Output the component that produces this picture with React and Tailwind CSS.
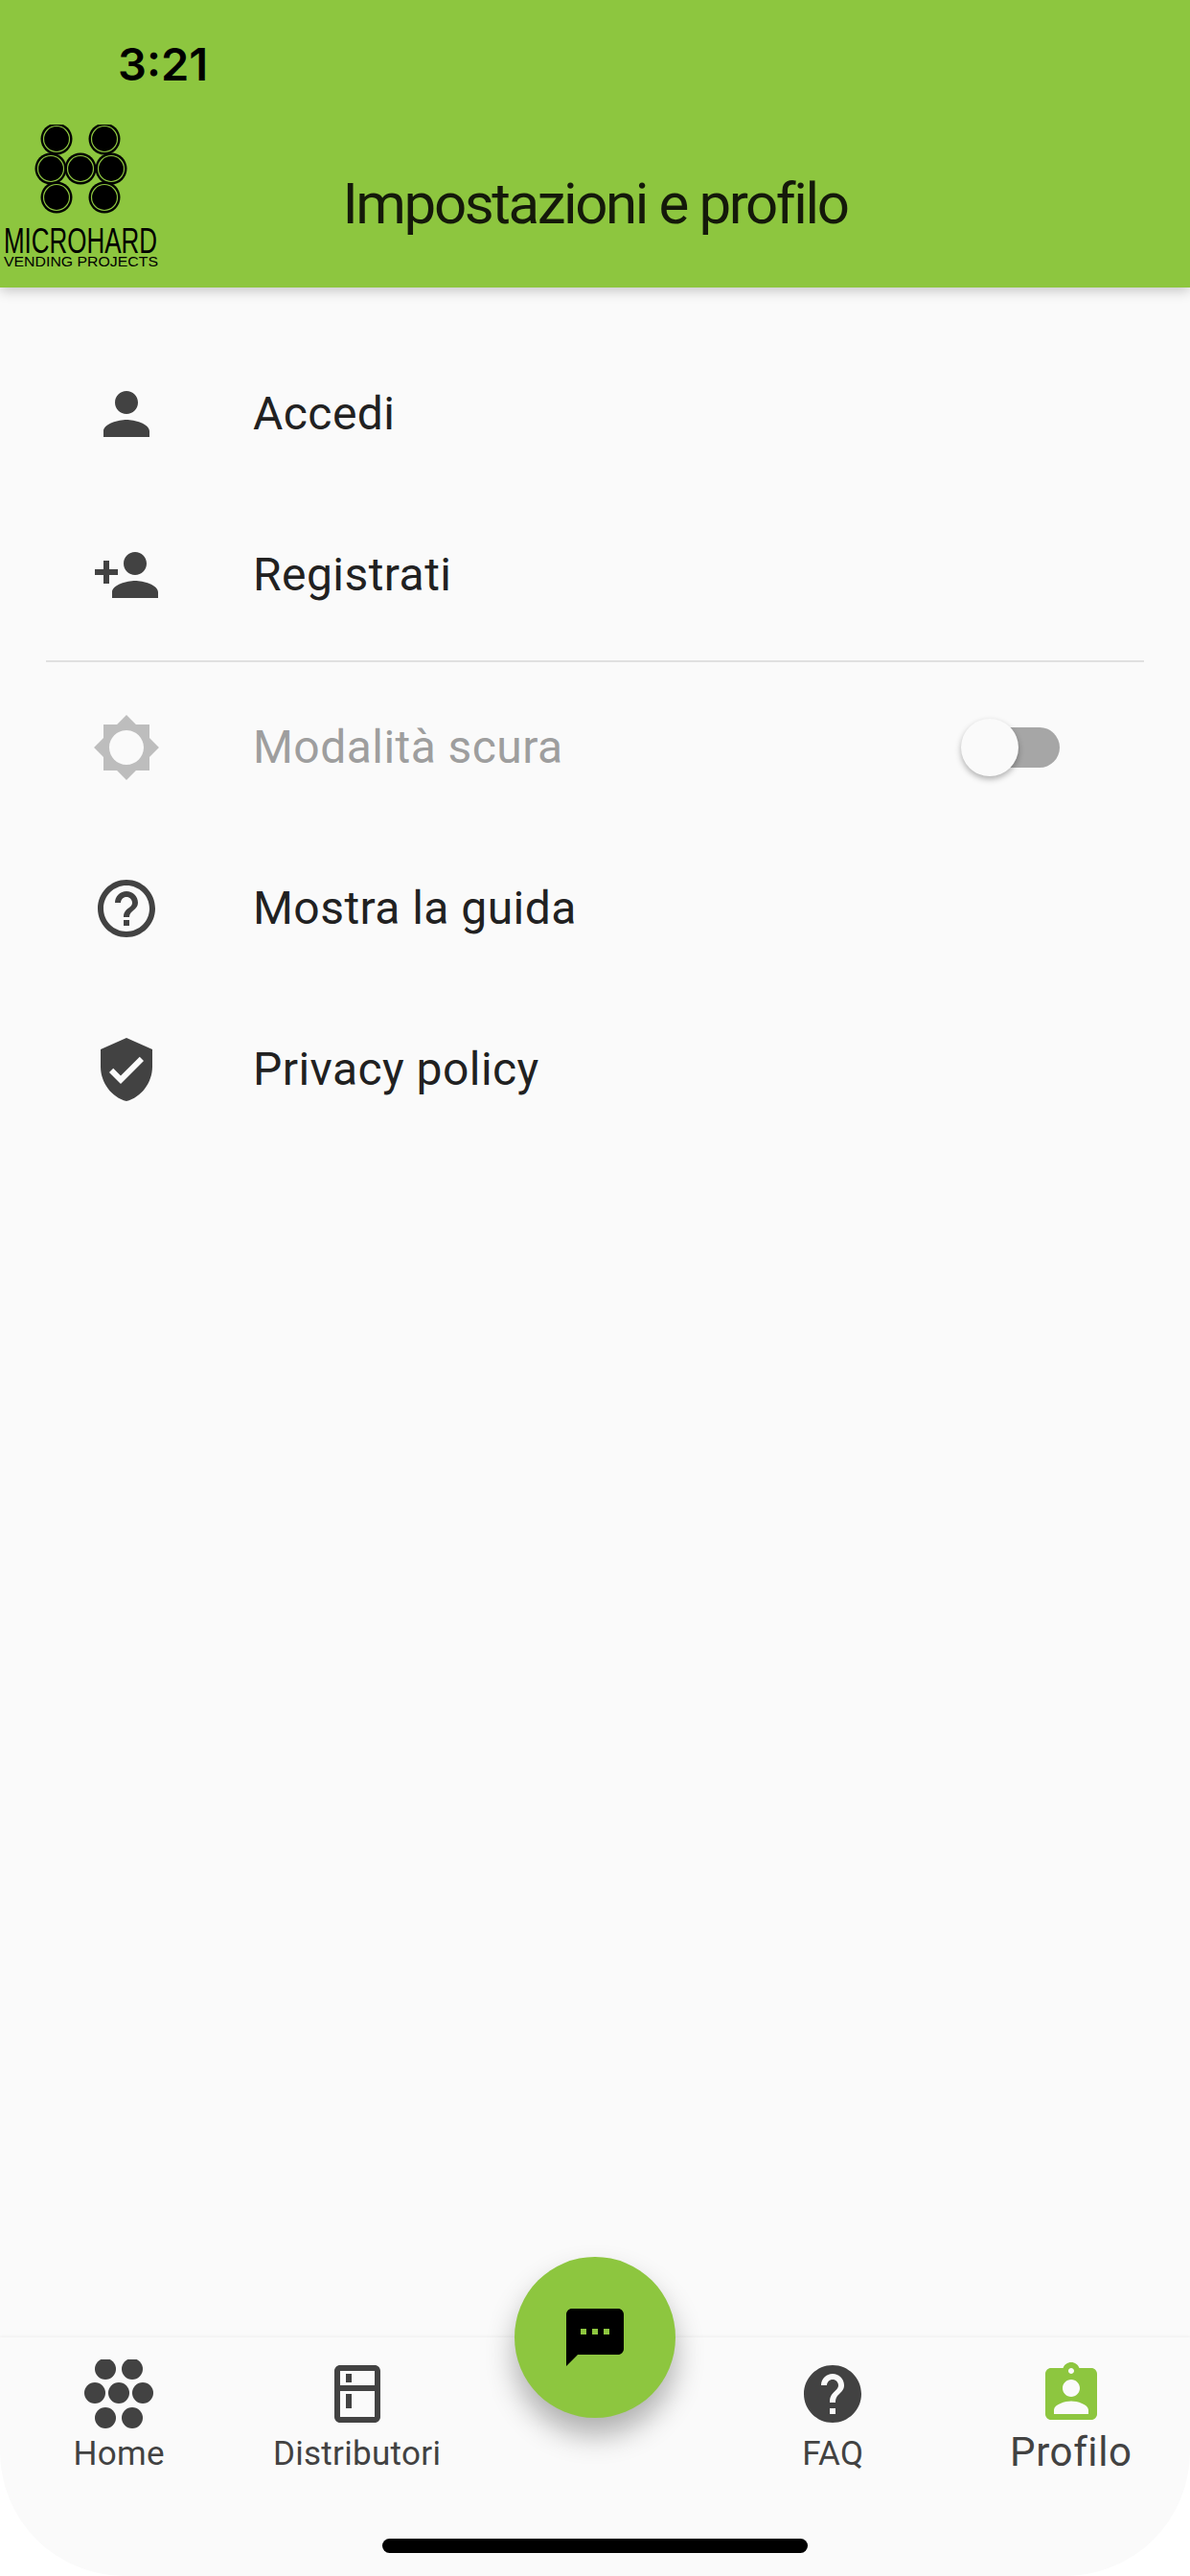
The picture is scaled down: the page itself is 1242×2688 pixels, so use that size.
import React from 'react';

const GREEN = '#8dc63f';

const Icon = ({ d, className = '', fill = '#424242' }) => (
  <svg viewBox="0 0 24 24" width="72" height="72" fill={fill} className={`shrink-0 ${className}`}>
    <path d={d} fillRule="evenodd" />
  </svg>
);

const icons = {
  person: 'M12 12c2.21 0 4-1.79 4-4s-1.79-4-4-4-4 1.79-4 4 1.79 4 4 4zm0 2c-2.67 0-8 1.34-8 4v2h16v-2c0-2.66-5.33-4-8-4z',
  personAdd: 'M15 12c2.21 0 4-1.79 4-4s-1.79-4-4-4-4 1.79-4 4 1.79 4 4 4zm-9-2V7H4v3H1v2h3v3h2v-3h3v-2H6zm9 4c-2.67 0-8 1.34-8 4v2h16v-2c0-2.66-5.33-4-8-4z',
  sun: 'M20 15.31L23.31 12 20 8.69V4h-4.69L12 .69 8.69 4H4v4.69L.69 12 4 15.31V20h4.69L12 23.31 15.31 20H20v-4.69zM12 18c-3.31 0-6-2.69-6-6s2.69-6 6-6 6 2.69 6 6-2.69 6-6 6z',
  helpOutline: 'M11 18h2v-2h-2v2zm1-16C6.48 2 2 6.48 2 12s4.48 10 10 10 10-4.48 10-10S17.52 2 12 2zm0 18c-4.41 0-8-3.59-8-8s3.59-8 8-8 8 3.59 8 8-3.59 8-8 8zm0-14c-2.21 0-4 1.79-4 4h2c0-1.1.9-2 2-2s2 .9 2 2c0 2-3 1.75-3 5h2c0-2.25 3-2.5 3-5 0-2.21-1.79-4-4-4z',
  shield: 'M12 1L3 5v6c0 5.55 3.84 10.74 9 12 5.16-1.26 9-6.45 9-12V5l-9-4zm-2 16l-4-4 1.41-1.41L10 14.17l6.59-6.59L18 9l-8 8z',
  sms: 'M20 2H4c-1.1 0-1.99.9-1.99 2L2 22l4-4h14c1.1 0 2-.9 2-2V4c0-1.1-.9-2-2-2zM9 11H7V9h2v2zm4 0h-2V9h2v2zm4 0h-2V9h2v2z',
  kitchen: 'M18 2.01L6 2c-1.1 0-2 .89-2 2v16c0 1.1.9 2 2 2h12c1.1 0 2-.9 2-2V4c0-1.11-.9-1.99-2-1.99zM18 20H6v-9.02h12V20zm0-11H6V4h12v5zM8 5h2v3H8zm0 7h2v5H8z',
  help: 'M12 2C6.48 2 2 6.48 2 12s4.48 10 10 10 10-4.48 10-10S17.52 2 12 2zm1 17h-2v-2h2v2zm2.07-7.75l-.9.92C13.45 12.9 13 13.5 13 15h-2v-.5c0-1.1.45-2.1 1.17-2.83l1.24-1.26c.37-.36.59-.86.59-1.41 0-1.1-.9-2-2-2s-2 .9-2 2H8c0-2.21 1.79-4 4-4s4 1.79 4 4c0 .88-.36 1.68-.93 2.25z',
  badge: 'M19 3h-4.18C14.4 1.84 13.3 1 12 1c-1.3 0-2.4.84-2.82 2H5c-1.1 0-2 .9-2 2v14c0 1.1.9 2 2 2h14c1.1 0 2-.9 2-2V5c0-1.1-.9-2-2-2zm-7 0c.55 0 1 .45 1 1s-.45 1-1 1-1-.45-1-1 .45-1 1-1zm0 4c1.66 0 3 1.34 3 3s-1.34 3-3 3-3-1.34-3-3 1.34-3 3-3zm6 12H6v-1.4c0-2 4-3.1 6-3.1s6 1.1 6 3.1V19z',
};

const HomeDots = () => (
  <svg viewBox="0 0 72 72" width="72" height="72" fill="#424242" className="shrink-0">
    {[[22, 10], [50, 10], [11, 35], [36, 35], [61, 35], [22, 61], [50, 61]].map(([cx, cy]) => (
      <circle key={`${cx}-${cy}`} cx={cx} cy={cy} r="11" />
    ))}
  </svg>
);

const Logo = () => (
  <svg viewBox="0 0 170 150" width="170" height="150" className="shrink-0">
    {[[59, 160], [109, 160], [53, 191], [84, 191], [116, 191], [59, 221], [109, 221]].map(([x, y]) => (
      <g key={`${x}-${y}`}>
        <circle cx={x} cy={y - 145} r="16.5" fill="#000" />
        <circle cx={x} cy={y - 145} r="13.5" fill="none" stroke={GREEN} strokeWidth="1.2" />
      </g>
    ))}
    <text x="4" y="134" textLength="160" lengthAdjust="spacingAndGlyphs" fontFamily="Liberation Sans, sans-serif" fontSize="36" fill="#000">MICROHARD</text>
    <text x="4" y="148" textLength="161" lengthAdjust="spacingAndGlyphs" fontFamily="Liberation Sans, sans-serif" fontSize="14" fill="#000">VENDING PROJECTS</text>
  </svg>
);

const Row = ({ icon, label, disabled, children }) => (
  <div className="flex h-[168px] items-center pl-[96px]">
    <Icon d={icon} fill={disabled ? '#bdbdbd' : '#424242'} />
    <span className={`ml-[96px] text-[48px] leading-[56px] tracking-[0.45px] ${disabled ? 'text-[#9e9e9e]' : 'text-[#212121]'}`}>
      {label}
    </span>
    {children}
  </div>
);

const NavItem = ({ icon, label, big }) => (
  <div className="flex flex-col items-center pt-[23px]">
    {icon}
    <span className={big ? 'mt-[5px] text-[42px] leading-[40px] tracking-[0.6px] text-[#424242]' : 'mt-[7px] text-[35px] leading-[40px] tracking-[0.3px] text-[#424242]'}>
      {label}
    </span>
  </div>
);

export default function App() {
  return (
    <div className="h-[2688px] w-[1242px] overflow-hidden bg-white font-[Roboto,sans-serif]">
      <div className="flex h-full flex-col rounded-b-[130px] bg-[#fafafa]">
        {/* App bar */}
        <header className="relative z-10 h-[300px] shrink-0 bg-[#8dc63f] shadow-[0_4px_12px_rgba(0,0,0,0.2)]">
          <div className="h-[130px] pl-[123px] pt-[39px] font-[Inter,sans-serif] text-[47px] font-semibold leading-[56px] text-black">3:21</div>
          <div className="relative flex h-[170px] items-center justify-center pb-[4px]">
            <div className="absolute left-0 top-0">
              <Logo />
            </div>
            <h1 className="text-[60px] font-normal leading-[72px] tracking-[-2.4px] text-[#14190a]">Impostazioni e profilo</h1>
          </div>
        </header>

        {/* Settings list */}
        <main className="flex-1 pt-[48px]">
          <Row icon={icons.person} label="Accedi" />
          <Row icon={icons.personAdd} label="Registrati" />
          <div className="flex h-[12px] items-center px-[48px]">
            <div className="h-[2px] w-full bg-[#e0e0e0]" />
          </div>
          <Row icon={icons.sun} label="Modalità scura" disabled>
            <div className="relative ml-auto mr-[136px] h-[42px] w-[102px] rounded-full bg-[#a6a6a6]">
              <div className="absolute left-[-1px] top-[-9px] h-[60px] w-[60px] rounded-full bg-[#fafafa] shadow-[0_3px_6px_rgba(0,0,0,0.3)]" />
            </div>
          </Row>
          <Row icon={icons.helpOutline} label="Mostra la guida" />
          <Row icon={icons.shield} label="Privacy policy" />
        </main>

        {/* Bottom navigation */}
        <nav className="relative grid h-[249px] shrink-0 grid-cols-5 shadow-[0_-1px_3px_rgba(0,0,0,0.05)]">
          <NavItem icon={<HomeDots />} label="Home" />
          <NavItem icon={<Icon d={icons.kitchen} />} label="Distributori" />
          <div />
          <NavItem icon={<Icon d={icons.help} />} label="FAQ" />
          <NavItem icon={<Icon d={icons.badge} fill={GREEN} />} label="Profilo" big />
          <div className="absolute left-[537px] top-[-84px] flex h-[168px] w-[168px] items-center justify-center rounded-full bg-[#8dc63f] shadow-[0_18px_30px_rgba(0,0,0,0.3)]">
            <Icon d={icons.sms} fill="#000" />
            <div className="absolute left-[60px] top-[72px] -z-10" />
          </div>
          <div className="absolute bottom-[24px] left-[399px] h-[15px] w-[444px] rounded-full bg-black" />
        </nav>
      </div>
    </div>
  );
}
